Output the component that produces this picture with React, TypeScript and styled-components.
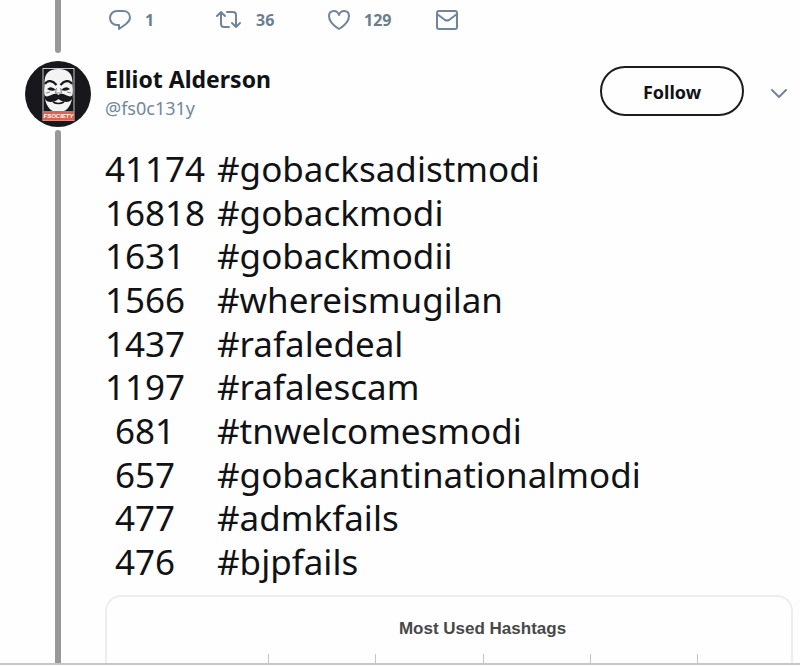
import React from "react";
import styled, { createGlobalStyle } from "styled-components";

const GlobalStyle = createGlobalStyle`
  body {
    margin: 0;
    background: #fefefe;
    color: #111216;
    font-family: "Noto Sans", "Open Sans", sans-serif;
  }
  *, *::before, *::after { box-sizing: border-box; }
`;

const Thread = styled.main`
  border-bottom: 2px solid #c6c6c6;
  overflow: hidden;
`;

const Entry = styled.article`
  display: grid;
  grid-template-columns: 25px 66px minmax(0, 1fr);
`;

const Rail = styled.div`
  grid-column: 2;
  display: flex;
  flex-direction: column;
  align-items: center;
  gap: 3px;
`;

const RailLine = styled.div<{ $end: "top" | "bottom" }>`
  flex: 1;
  width: 6px;
  background: #989898;
  border-radius: ${(p) => (p.$end === "top" ? "3px 3px 0 0" : "0 0 3px 3px")};
`;

const Actions = styled.div`
  display: flex;
  align-items: flex-start;
  height: 53px;
  padding: 7px 0 0 18px;
`;

const Action = styled.button<{ $width: number }>`
  display: flex;
  align-items: center;
  gap: 14px;
  width: ${(p) => p.$width}px;
  height: 26px;
  padding: 0;
  border: 0;
  background: none;
  color: #6a7e90;
  font: 700 16px/24px "Noto Sans", "Open Sans", sans-serif;
  svg { flex: none; }
`;

const Icon = styled.svg`
  fill: none;
  stroke: #71859a;
  stroke-width: 2;
  stroke-linecap: round;
  stroke-linejoin: round;
`;

const Tweet = styled(Entry)`
  padding-top: 8px;
`;

const Body = styled.div`
  min-width: 0;
  padding: 0 7px 0 14px;
`;

const Header = styled.header`
  display: flex;
  align-items: flex-start;
  height: 86px;
`;

const Author = styled.a`
  flex: 1;
  display: flex;
  flex-direction: column;
  padding-top: 4px;
  color: inherit;
  text-decoration: none;
`;

const Name = styled.strong`
  font: 700 23px/28px "Noto Sans", "Open Sans", sans-serif;
`;

const Handle = styled.span`
  color: #7187a0;
  font-size: 18px;
  line-height: 30px;
`;

const Follow = styled.button`
  width: 144px;
  height: 50px;
  margin-top: 5px;
  padding: 2px 0 0;
  border: 2px solid #1c1c1f;
  border-radius: 25px;
  background: #fefefe;
  color: #111216;
  font: 700 18px/24px "Noto Sans", "Open Sans", sans-serif;
`;

const More = styled.button`
  width: 22px;
  height: 50px;
  margin: 8px 3px 0 24px;
  padding: 0;
  border: 0;
  background: none;
  svg { display: block; margin: auto; }
`;

const Tally = styled.table`
  height: 437px;
  border-collapse: collapse;
  font-size: 35px;
  line-height: 40px;
`;

const Count = styled.th<{ $indent: boolean }>`
  width: 112px;
  padding: 0 0 0 ${(p) => (p.$indent ? 10 : 0)}px;
  font-weight: 400;
  text-align: left;
`;

const Tag = styled.td`
  padding: 0;
  white-space: nowrap;
`;

const Chart = styled.figure`
  height: 68px;
  margin: 11px 0 0;
  border: 2px solid #ededed;
  border-bottom: 0;
  border-radius: 16px 16px 0 0;
  display: flex;
  flex-direction: column;
  justify-content: space-between;
`;

const ChartTitle = styled.figcaption`
  padding-top: 20px;
  padding-left: 67px;
  color: #48484a;
  font: 700 17px/24px "Liberation Sans", Arial, sans-serif;
  text-align: center;
`;

const Ticks = styled.div`
  display: flex;
  justify-content: space-between;
  padding: 0 93px 0 161px;
`;

const Tick = styled.span`
  width: 1px;
  height: 9px;
  background: #c4c4c4;
`;

const Avatar = () => (
  <svg width="66" height="66" viewBox="0 0 66 66" role="img" aria-label="Elliot Alderson">
    <circle cx="33" cy="33" r="33" fill="#17171c" />
    <rect x="18" y="7.5" width="31" height="52" fill="#17171c" stroke="#c8c8c8" />
    <path d="M19.500 24C19 13 23 8 33.500 8S48 13 47.500 24c1 7 0 14-2 19-3 6-6 8-12 8s-9-2-12-8c-2-5-3-12-2-19Z" fill="#f3f3f3" />
    <path d="M20 23c3-5 8-3 11.500 1M47 23c-3-5-8-3-11.500 1" fill="none" stroke="#17171c" strokeWidth="2.2" />
    <path d="M22 28q4-4 9 1-5 2-9-1ZM45 28q-4-4-9 1 5 2 9-1Z" fill="#17171c" />
    <path d="M31.500 27l-1 5h6l-1-5M21 32l4-1M46 32l-4-1" fill="none" stroke="#888" />
    <path d="M33.500 34c-3-3-7 0-10 1-2 1-4 0-4-2-1 5 2 8 6 8 3 0 6-1 8-3 2 2 5 3 8 3 4 0 7-3 6-8 0 2-2 3-4 2-3-1-7-4-10-1Z" fill="#17171c" />
    <path d="M28 41q5.500 3 11 0" fill="none" stroke="#17171c" strokeWidth="1.6" />
    <rect x="18" y="50" width="31" height="9.500" fill="#e2604f" />
    <text x="33.500" y="57" textAnchor="middle" fill="#fff" fontFamily="Liberation Sans, sans-serif" fontSize="6" fontWeight="700" fontStyle="italic">FSOCIETY</text>
  </svg>
);

const tally: [number, string][] = [
  [41174, "#gobacksadistmodi"],
  [16818, "#gobackmodi"],
  [1631, "#gobackmodii"],
  [1566, "#whereismugilan"],
  [1437, "#rafaledeal"],
  [1197, "#rafalescam"],
  [681, "#tnwelcomesmodi"],
  [657, "#gobackantinationalmodi"],
  [477, "#admkfails"],
  [476, "#bjpfails"],
];

export default function App() {
  return (
    <>
      <GlobalStyle />
      <Thread>
        <Entry>
          <Rail><RailLine $end="bottom" /></Rail>
          <Actions>
            <Action $width={107} aria-label="Reply, 1">
              <Icon width="22" height="22" viewBox="0 0 22 22">
                <path d="M8 2h6c4 0 7 2.500 7 6.500 0 3-2 5-4 6.500L10 20v-4H8c-4 0-7-3-7-7s3-7 7-7Z" />
              </Icon>
              1
            </Action>
            <Action $width={112} aria-label="Retweet, 36">
              <Icon width="26" height="22" viewBox="0 0 26 22">
                <path d="M1 7l4-4 4 4M5 4v11q0 3 3 3h5M11 3h6q3 0 3 3v12M16 14l4 4 4-4" />
              </Icon>
              36
            </Action>
            <Action $width={108} aria-label="Like, 129">
              <Icon width="22" height="22" viewBox="0 0 22 22">
                <path d="M11 20C6 17 1 12 1 7c0-3 2-5 5-5 2 0 4 1 5 4 1-3 3-4 5-4 3 0 5 2 5 5 0 5-5 10-10 13Z" />
              </Icon>
              129
            </Action>
            <Action $width={24} aria-label="Direct message">
              <Icon width="22" height="22" viewBox="0 0 22 22">
                <rect x="1" y="2" width="20" height="18" rx="2" />
                <path d="M1 5l8 6q2 1 4 0l8-6" />
              </Icon>
            </Action>
          </Actions>
        </Entry>
        <Tweet>
          <Rail>
            <Avatar />
            <RailLine $end="top" />
          </Rail>
          <Body>
            <Header>
              <Author href="#fs0c131y">
                <Name>Elliot Alderson</Name>
                <Handle>@fs0c131y</Handle>
              </Author>
              <Follow>Follow</Follow>
              <More aria-label="More options">
                <Icon width="18" height="12" viewBox="0 0 18 12">
                  <path d="M2 2l7 7 7-7" />
                </Icon>
              </More>
            </Header>
            <Tally>
              <tbody>
                {tally.map(([count, tag]) => (
                  <tr key={tag}>
                    <Count scope="row" $indent={count < 1000}>{count}</Count>
                    <Tag>{tag}</Tag>
                  </tr>
                ))}
              </tbody>
            </Tally>
            <Chart>
              <ChartTitle>Most Used Hashtags</ChartTitle>
              <Ticks>
                <Tick /><Tick /><Tick /><Tick /><Tick />
              </Ticks>
            </Chart>
          </Body>
        </Tweet>
      </Thread>
    </>
  );
}
